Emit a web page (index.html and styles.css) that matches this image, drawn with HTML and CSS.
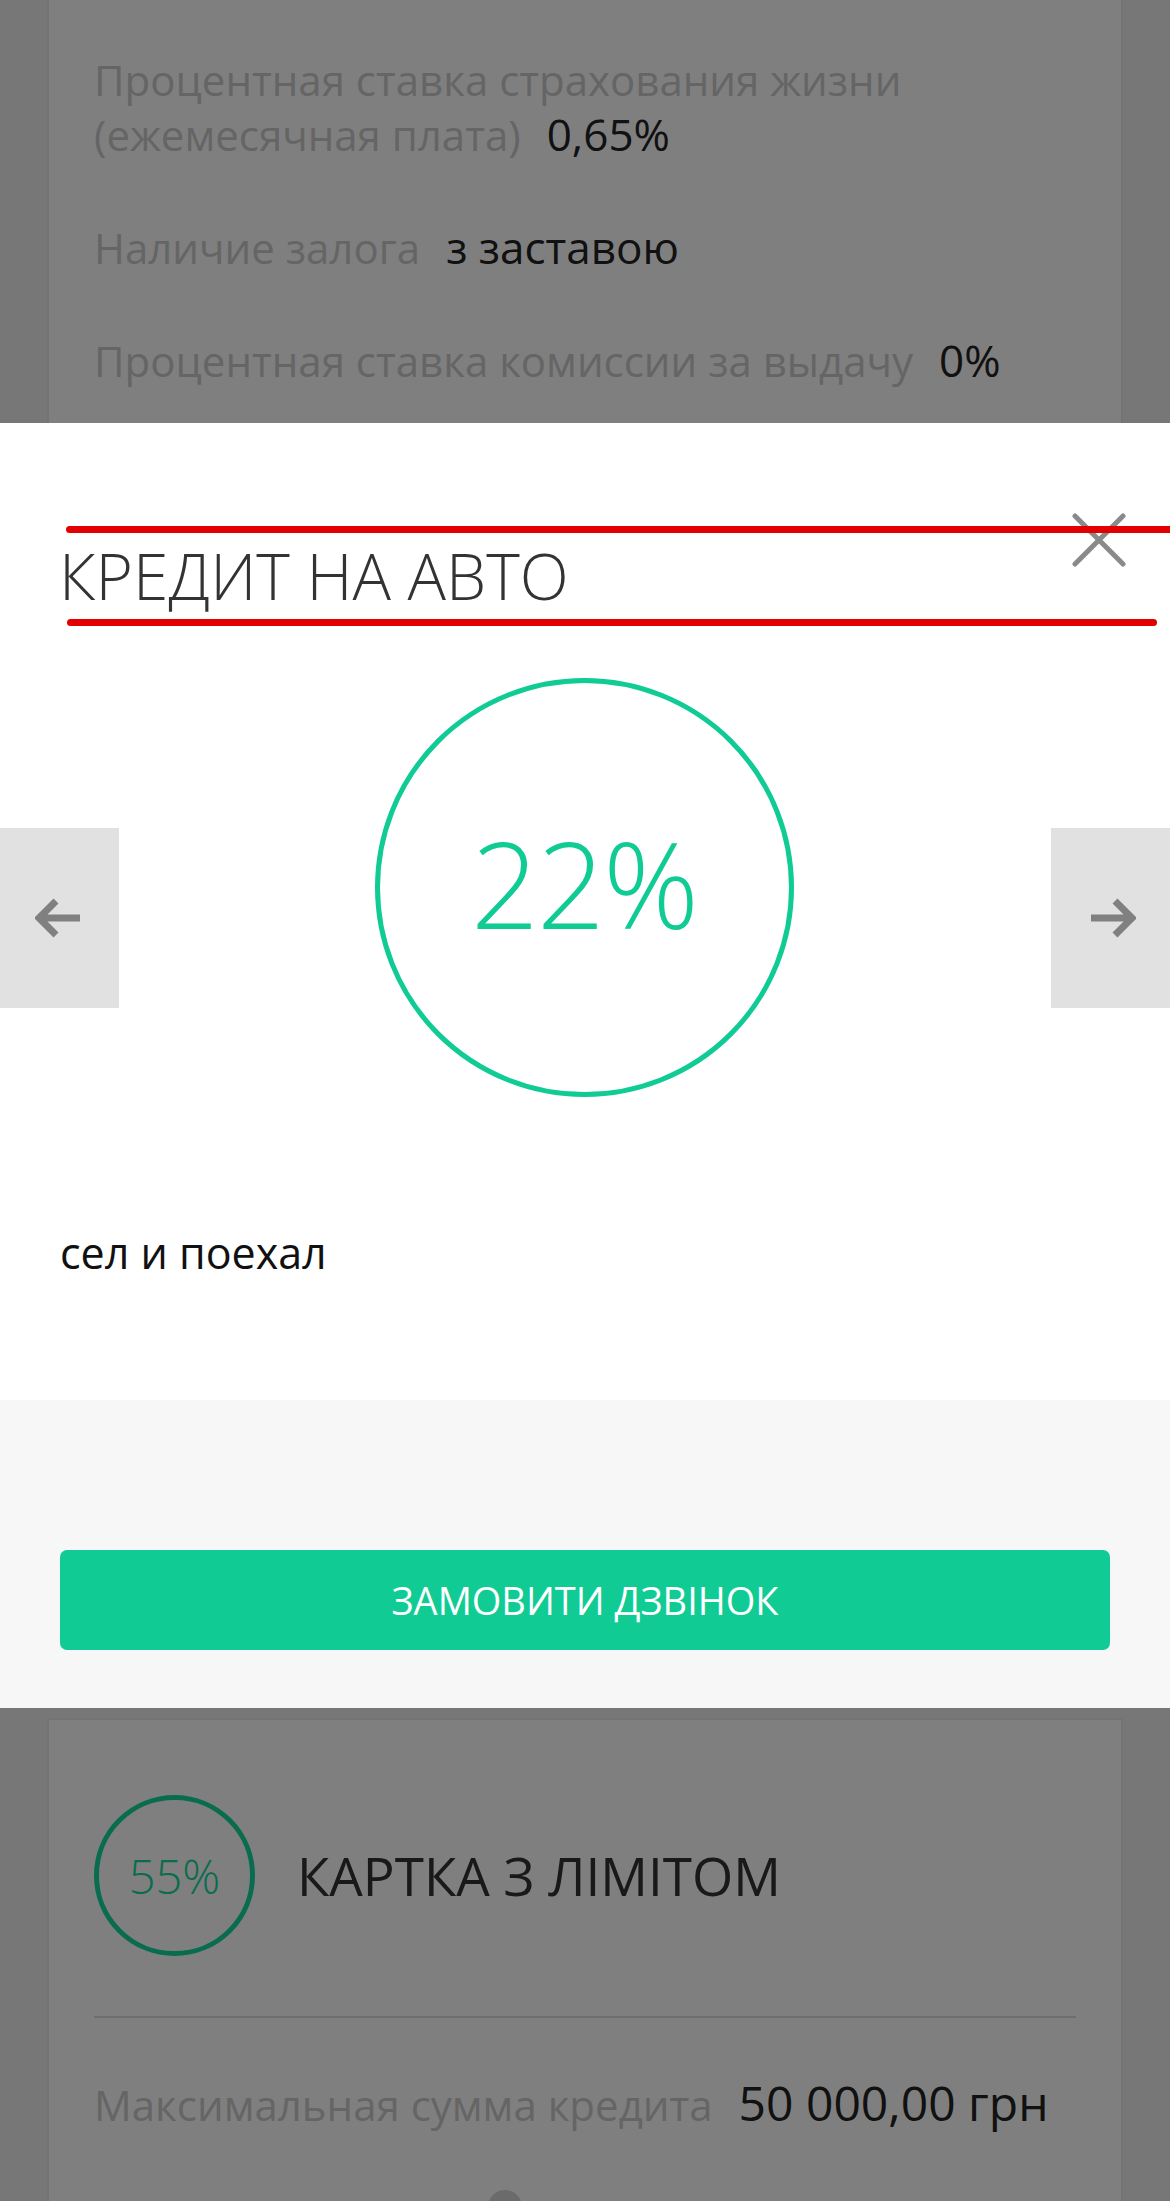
FILE: index.html
```html
<!DOCTYPE html>
<html lang="uk">
<head>
<meta charset="utf-8">
<title>Кредит на авто</title>
<link rel="stylesheet" href="styles.css">
</head>
<body>
<div class="page">
  <section class="card card-top">
    <div class="row"><span class="label">Процентная ставка страхования жизни (ежемесячная плата)</span><span class="value">0,65%</span></div>
    <div class="row"><span class="label">Наличие залога</span><span class="value">з заставою</span></div>
    <div class="row"><span class="label">Процентная ставка комиссии за выдачу</span><span class="value">0%</span></div>
  </section>
  <section class="card card-second">
    <div class="card-head">
      <div class="mini-circle">55%</div>
      <h2 class="card-title">КАРТКА З ЛІМІТОМ</h2>
    </div>
    <div class="divider"></div>
    <div class="row"><span class="label">Максимальная сумма кредита</span><span class="value value-big">50 000,00 грн</span></div>
    <div class="row-icon"><span class="dot"></span></div>
  </section>
</div>
<div class="overlay"></div>
<div class="modal">
  <div class="modal-body">
    <div class="modal-head">
      <div class="red-line red-top"></div>
      <h1 class="modal-title">КРЕДИТ НА АВТО</h1>
      <div class="red-line red-bottom"></div>
      <button class="close" aria-label="close">
        <svg width="54" height="54" viewBox="0 0 54 54"><path d="M3 3 L51 51 M51 3 L3 51" stroke="#8a8a8a" stroke-width="5" stroke-linecap="round" fill="none"/></svg>
      </button>
    </div>
    <div class="rate-wrap">
      <button class="nav nav-prev" aria-label="prev">
        <svg width="50" height="40" viewBox="0 0 50 40"><path d="M21 3 L4 20 L21 37 M5 20 L45 20" stroke="#808080" stroke-width="7" fill="none"/></svg>
      </button>
      <div class="rate-circle"><span class="rate">22%</span></div>
      <button class="nav nav-next" aria-label="next">
        <svg width="50" height="40" viewBox="0 0 50 40"><path d="M29 3 L46 20 L29 37 M45 20 L5 20" stroke="#808080" stroke-width="7" fill="none"/></svg>
      </button>
    </div>
    <p class="desc">сел и поехал</p>
  </div>
  <div class="modal-footer">
    <button class="cta">ЗАМОВИТИ ДЗВІНОК</button>
  </div>
</div>
</body>
</html>
```

FILE: styles.css
```css
* { box-sizing: border-box; }
html, body { margin: 0; padding: 0; }
body {
  background: #eeeeee;
  font-family: "Open Sans", "Liberation Sans", sans-serif;
  width: 1170px;
  height: 2201px;
  overflow: hidden;
}
.page { padding: 0 47px; }
.card {
  background: #ffffff;
  border: 2px solid #e6e6e6;
  padding: 0 45px;
}
.card-top {
  border-top: 0;
  height: 1698px;
  padding-top: 52px;
  margin-bottom: 20px;
}
.row {
  font-size: 42px;
  line-height: 55px;
  margin-bottom: 58px;
}
.label { color: #cbcbcb; margin-right: 26px; }
.value { color: #222222; font-size: 44px; }
.value-big { font-size: 48px; }
.card-second { padding-top: 75px; }
.card-head { display: flex; align-items: center; gap: 42px; }
.mini-circle {
  width: 161px; height: 161px;
  border: 5px solid #15d89c;
  border-radius: 50%;
  display: flex; align-items: center; justify-content: center;
  color: #15d89c;
  font-size: 47px;
  font-weight: 300;
  flex: none;
}
.card-title {
  margin: 0;
  font-size: 53px;
  font-weight: 400;
  color: #333333;
}
.divider { height: 2px; background: #dcdcdc; margin: 60px 0 57px; }
.row-icon { display: flex; padding-left: 394px; }
.dot { width: 34px; height: 34px; border-radius: 50%; background: #d6d6d6; }

.overlay {
  position: fixed; inset: 0;
  background: rgba(0, 0, 0, 0.5);
}
.modal {
  position: fixed; top: 423px; left: 0; width: 1170px;
}
.modal-body {
  background: #ffffff;
  height: 977px;
  position: relative;
  padding-top: 103px;
}
.modal-head { position: relative; }
.red-line {
  height: 7px;
  background: #e30000;
  border-radius: 4px;
  position: relative;
  z-index: 2;
}
.red-top { margin-left: 66px; margin-right: -10px; }
.red-bottom { margin-left: 67px; width: 1090px; }
.modal-title {
  margin: 0;
  padding-left: 59px;
  height: 86px;
  line-height: 86px;
  font-size: 64px;
  font-weight: 300;
  color: #333333;
  padding-top: 0;
}
.close {
  position: absolute; top: -13px; left: 1072px;
  width: 54px; height: 54px;
  padding: 0; border: 0; background: none;
  z-index: 1;
}
.close svg { display: block; }
.rate-wrap {
  position: relative;
  margin-top: 52px;
  display: flex; justify-content: center;
}
.rate-circle {
  width: 419px; height: 419px;
  border: 5px solid #10cc94;
  border-radius: 50%;
  display: flex; align-items: center; justify-content: center;
  margin-left: -2px;
}
.rate {
  color: #10cc94;
  font-size: 119px;
  font-weight: 300;
  letter-spacing: -2px;
  margin-bottom: 10px;
}
.nav {
  position: absolute; top: 150px;
  width: 119px; height: 180px;
  background: #e1e1e1;
  border: 0; padding: 0;
  display: flex; align-items: center; justify-content: center;
}
.nav-prev { left: 0; }
.nav-next { right: 0; }
.desc {
  margin: 128px 0 0;
  padding-left: 60px;
  font-size: 43px;
  line-height: 55px;
  color: #111111;
}
.modal-footer {
  background: #f7f7f7;
  height: 308px;
  padding: 150px 60px 0;
}
.cta {
  display: block;
  width: 1050px; height: 100px;
  background: #10cc94;
  color: #ffffff;
  border: 0; border-radius: 7px;
  font-family: "Open Sans", "Liberation Sans", sans-serif;
  font-size: 38px;
}
```
